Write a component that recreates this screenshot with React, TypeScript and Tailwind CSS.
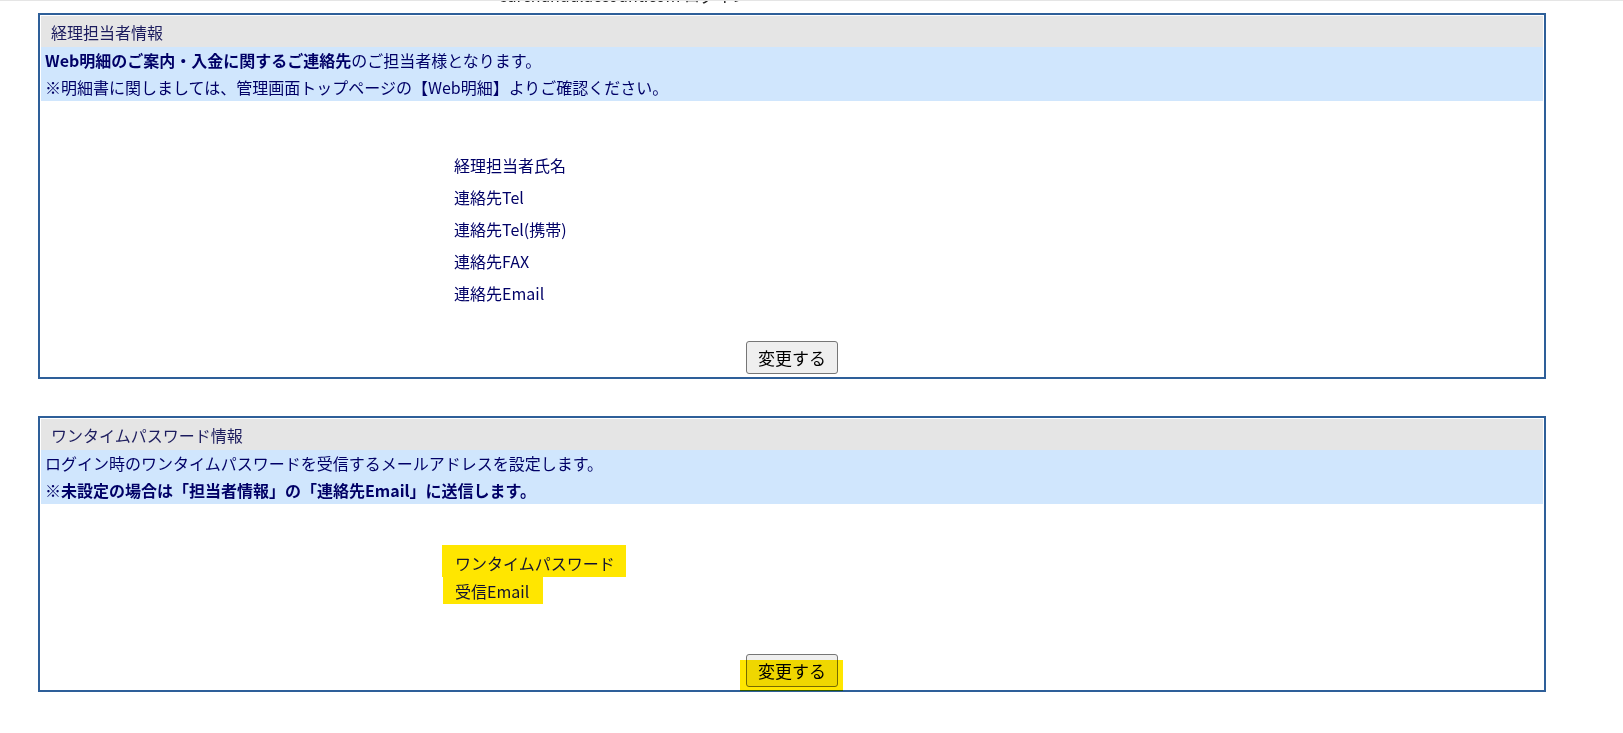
import React from 'react';

const font = { fontFamily: '"Noto Sans CJK JP", "Noto Sans", sans-serif' };

const contactLabels = ['経理担当者氏名', '連絡先Tel', '連絡先Tel(携帯)', '連絡先FAX', '連絡先Email'];

function SectionHeader({ title }: { title: string }) {
  return (
    <div className="h-[31px] bg-[#e5e5e5] pl-[10px] flex items-center text-[16px] text-[#1c1c5e]">
      {title}
    </div>
  );
}

function ChangeButton() {
  return (
    <button
      type="button"
      className="w-[92px] h-[33px] bg-[#efefef] border border-[#767676] rounded-[3px] text-[17px] text-black leading-none"
    >
      変更する
    </button>
  );
}

export default function App() {
  return (
    <div className="w-[1623px] min-h-[733px] bg-white text-[#000066]" style={font}>
      {/* top of the page, scrolled away */}
      <div className="h-[13px] border-t border-[#e5e5e5] relative overflow-hidden">
        <div className="absolute left-[500px] top-[-16px] text-[16px] leading-[20px] text-[#222]">
          sarchundu.account.com ログイン
        </div>
      </div>

      {/* 経理担当者情報 */}
      <div className="ml-[38px] w-[1508px] h-[366px] border-2 border-[#2e5f99] p-[1px] flex flex-col">
        <SectionHeader title="経理担当者情報" />
        <div className="h-[54px] bg-[#d0e6fd] pl-[4px] text-[16px] leading-[27px]">
          <div>
            <span className="font-bold">Web明細のご案内・入金に関するご連絡先</span>
            のご担当者様となります。
          </div>
          <div>※明細書に関しましては、管理画面トップページの【Web明細】よりご確認ください。</div>
        </div>
        <div className="flex-1 flex flex-col">
          <div className="pt-[48px] pl-[413px]">
            {contactLabels.map((label) => (
              <div key={label} className="h-[32px] flex items-center text-[16px]">
                {label}
              </div>
            ))}
          </div>
          <div className="mt-auto pb-[2px] flex justify-center">
            <ChangeButton />
          </div>
        </div>
      </div>

      {/* ワンタイムパスワード情報 */}
      <div className="mt-[37px] ml-[38px] w-[1508px] h-[276px] border-2 border-[#2e5f99] p-[1px] flex flex-col">
        <SectionHeader title="ワンタイムパスワード情報" />
        <div className="h-[54px] bg-[#d0e6fd] pl-[4px] text-[16px] leading-[27px]">
          <div>ログイン時のワンタイムパスワードを受信するメールアドレスを設定します。</div>
          <div className="font-bold">※未設定の場合は「担当者情報」の「連絡先Email」に送信します。</div>
        </div>
        <div className="flex-1 flex flex-col">
          <div className="pt-[41px] flex flex-col items-start">
            <div className="ml-[401px] w-[184px] h-[32px] pl-[13px] pt-[4px] bg-[#ffe600] flex items-center text-[16px] text-[#111133]">
              ワンタイムパスワード
            </div>
            <div className="ml-[402px] w-[100px] h-[27px] pl-[12px] bg-[#ffe600] flex items-center text-[16px] text-[#111133]">
              受信Email
            </div>
          </div>
          <div className="mt-auto pb-[2px] flex justify-center">
            <div className="relative">
              <ChangeButton />
              <div className="absolute left-[-6px] top-[6px] w-[103px] h-[31px] bg-[#ffe600] mix-blend-multiply pointer-events-none" />
            </div>
          </div>
        </div>
      </div>
    </div>
  );
}
